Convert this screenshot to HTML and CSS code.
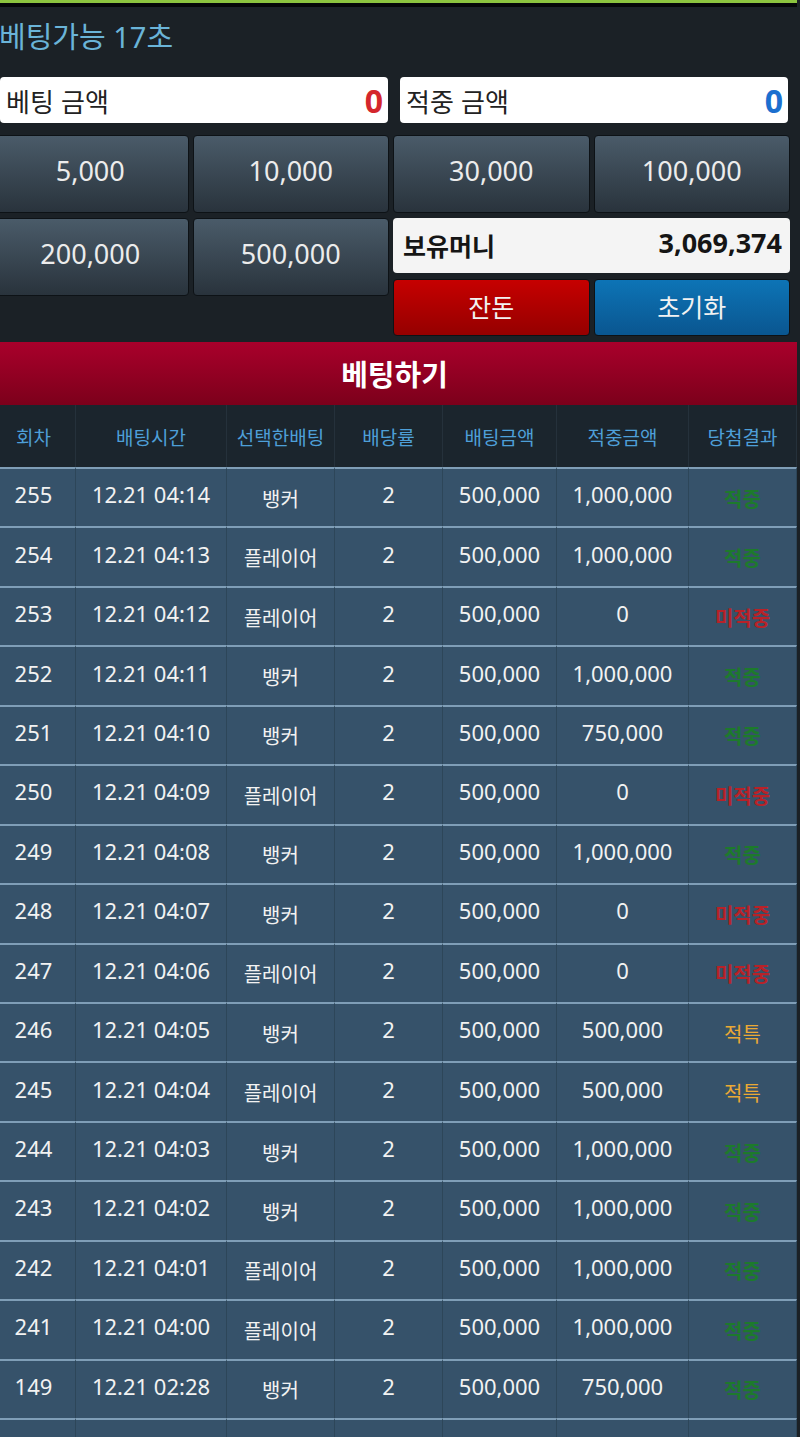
FILE: index.html
```html
<!DOCTYPE html>
<html lang="ko">
<head>
<meta charset="utf-8">
<title>베팅</title>
<link rel="stylesheet" href="styles.css">
</head>
<body>
<div class="page">
  <div class="topline"></div>
  <section class="panel">
    <h1 class="timer">베팅가능 17초</h1>
    <div class="amounts">
      <div class="amount"><span class="amount-label">베팅 금액</span><span class="amount-value red">0</span></div>
      <div class="amount"><span class="amount-label">적중 금액</span><span class="amount-value blue">0</span></div>
    </div>
    <div class="chips">
      <button class="chip">5,000</button>
      <button class="chip">10,000</button>
      <button class="chip">30,000</button>
      <button class="chip">100,000</button>
      <button class="chip">200,000</button>
      <button class="chip">500,000</button>
      <div class="side">
        <div class="money"><span class="money-label">보유머니</span><span class="money-value">3,069,374</span></div>
        <div class="actions">
          <button class="action change">잔돈</button>
          <button class="action reset">초기화</button>
        </div>
      </div>
    </div>
  </section>
  <div class="bet-bar">베팅하기</div>
  <table class="history">
    <colgroup>
      <col class="c1"><col class="c2"><col class="c3"><col class="c4"><col class="c5"><col class="c6"><col class="c7">
    </colgroup>
    <thead>
      <tr><th>회차</th><th>배팅시간</th><th>선택한배팅</th><th>배당률</th><th>배팅금액</th><th>적중금액</th><th>당첨결과</th></tr>
    </thead>
    <tbody>
      <tr><td>255</td><td>12.21 04:14</td><td class="ko">뱅커</td><td>2</td><td>500,000</td><td>1,000,000</td><td class="ko win">적중</td></tr>
      <tr><td>254</td><td>12.21 04:13</td><td class="ko">플레이어</td><td>2</td><td>500,000</td><td>1,000,000</td><td class="ko win">적중</td></tr>
      <tr><td>253</td><td>12.21 04:12</td><td class="ko">플레이어</td><td>2</td><td>500,000</td><td>0</td><td class="ko lose">미적중</td></tr>
      <tr><td>252</td><td>12.21 04:11</td><td class="ko">뱅커</td><td>2</td><td>500,000</td><td>1,000,000</td><td class="ko win">적중</td></tr>
      <tr><td>251</td><td>12.21 04:10</td><td class="ko">뱅커</td><td>2</td><td>500,000</td><td>750,000</td><td class="ko win">적중</td></tr>
      <tr><td>250</td><td>12.21 04:09</td><td class="ko">플레이어</td><td>2</td><td>500,000</td><td>0</td><td class="ko lose">미적중</td></tr>
      <tr><td>249</td><td>12.21 04:08</td><td class="ko">뱅커</td><td>2</td><td>500,000</td><td>1,000,000</td><td class="ko win">적중</td></tr>
      <tr><td>248</td><td>12.21 04:07</td><td class="ko">뱅커</td><td>2</td><td>500,000</td><td>0</td><td class="ko lose">미적중</td></tr>
      <tr><td>247</td><td>12.21 04:06</td><td class="ko">플레이어</td><td>2</td><td>500,000</td><td>0</td><td class="ko lose">미적중</td></tr>
      <tr><td>246</td><td>12.21 04:05</td><td class="ko">뱅커</td><td>2</td><td>500,000</td><td>500,000</td><td class="ko tie">적특</td></tr>
      <tr><td>245</td><td>12.21 04:04</td><td class="ko">플레이어</td><td>2</td><td>500,000</td><td>500,000</td><td class="ko tie">적특</td></tr>
      <tr><td>244</td><td>12.21 04:03</td><td class="ko">뱅커</td><td>2</td><td>500,000</td><td>1,000,000</td><td class="ko win">적중</td></tr>
      <tr><td>243</td><td>12.21 04:02</td><td class="ko">뱅커</td><td>2</td><td>500,000</td><td>1,000,000</td><td class="ko win">적중</td></tr>
      <tr><td>242</td><td>12.21 04:01</td><td class="ko">플레이어</td><td>2</td><td>500,000</td><td>1,000,000</td><td class="ko win">적중</td></tr>
      <tr><td>241</td><td>12.21 04:00</td><td class="ko">플레이어</td><td>2</td><td>500,000</td><td>1,000,000</td><td class="ko win">적중</td></tr>
      <tr><td>149</td><td>12.21 02:28</td><td class="ko">뱅커</td><td>2</td><td>500,000</td><td>750,000</td><td class="ko win">적중</td></tr>
      <tr><td>1056</td><td>12.20 23:55</td><td class="ko">플레이어</td><td>2</td><td>357,000</td><td>0</td><td class="ko lose">미적중</td></tr>
    </tbody>
  </table>
</div>
</body>
</html>
```

FILE: styles.css
```css
html, body {
  margin: 0;
  padding: 0;
}
body {
  background: #1b2126;
  font-family: "Noto Sans", "Noto Sans CJK KR", sans-serif;
  overflow: hidden;
}
.page {
  margin-left: -8px;
  width: 805px;
}
.topline {
  height: 3px;
  background: #8cc43f;
  border-bottom: 4px solid #050708;
}
.panel {
  background: #1b2126;
  padding-bottom: 6px;
}
.timer {
  margin: 0;
  height: 63px;
  line-height: 60px;
  padding-left: 7px;
  font-size: 29px;
  font-weight: 400;
  color: #6ab4d8;
  font-family: "Noto Sans", "Noto Sans CJK KR", sans-serif;
}
.amounts {
  display: flex;
  gap: 12px;
  margin-top: 7px;
  padding-left: 8px;
}
.amount {
  width: 388px;
  height: 46px;
  box-sizing: border-box;
  background: #ffffff;
  border-radius: 4px;
  display: flex;
  align-items: center;
  justify-content: space-between;
  padding: 0 5px 0 6px;
}
.amount-label {
  font-size: 26px;
  color: #222;
  font-family: "Noto Sans CJK KR", sans-serif;
}
.amount-value {
  font-size: 32px;
  font-weight: 700;
}
.red { color: #d4262c; }
.blue { color: #1b6fcf; }
.chips {
  display: grid;
  grid-template-columns: repeat(4, 1fr);
  column-gap: 4px;
  row-gap: 5px;
  margin: 12px 7px 0 0;
  align-items: start;
}
.chip, .action {
  font-family: "Noto Sans", "Noto Sans CJK KR", sans-serif;
  border: 1px solid #0d1216;
  border-radius: 4px;
  padding: 0;
  cursor: pointer;
}
.chip {
  height: 78px;
  padding-bottom: 8px;
  background: linear-gradient(#4a5b69, #29333c);
  color: #ececec;
  font-size: 27px;
}
.side {
  grid-column: span 2;
  display: flex;
  flex-direction: column;
  gap: 6px;
}
.money {
  height: 55px;
  box-sizing: border-box;
  background: #f4f4f4;
  border-radius: 4px;
  display: flex;
  align-items: center;
  justify-content: space-between;
  padding: 0 8px 6px 10px;
  color: #151515;
  font-weight: 700;
}
.money-label {
  font-size: 25px;
  font-family: "Noto Sans CJK KR", sans-serif;
  padding-top: 5px;
}
.money-value {
  font-size: 27px;
}
.actions {
  display: grid;
  grid-template-columns: 1fr 1fr;
  gap: 4px;
}
.action {
  height: 57px;
  padding-bottom: 3px;
  color: #f2f2f2;
  font-size: 25px;
  font-family: "Noto Sans CJK KR", sans-serif;
}
.change {
  background: linear-gradient(#c60000, #950000);
}
.reset {
  background: linear-gradient(#0d74b6, #0a5690);
}
.bet-bar {
  height: 63px;
  line-height: 63px;
  background: linear-gradient(#a9002b, #7c001b);
  color: #ffffff;
  font-size: 29px;
  font-weight: 700;
  text-align: center;
  font-family: "Noto Sans CJK KR", sans-serif;
}
.history {
  width: 805px;
  table-layout: fixed;
  border-collapse: separate;
  border-spacing: 0;
}
.c1 { width: 84px; }
.c2 { width: 151px; }
.c3 { width: 108px; }
.c4 { width: 108px; }
.c5 { width: 114px; }
.c6 { width: 132px; }
.c7 { width: 108px; }
.history th {
  height: 62px;
  padding: 0;
  background: #1b252d;
  color: #4e9fd8;
  font-size: 19px;
  font-weight: 400;
  font-family: "Noto Sans CJK KR", sans-serif;
  border-right: 1px solid #25313b;
}
.history td {
  height: 50.44px;
  padding: 0 0 7px;
  background: #36526a;
  color: #f2f2f2;
  font-size: 22px;
  text-align: center;
  vertical-align: middle;
  border-top: 2px solid #7f9eb7;
  border-right: 1px solid #2d4659;
  white-space: nowrap;
}
.history td.ko {
  font-family: "Noto Sans CJK KR", sans-serif;
  font-size: 20px;
  padding: 1px 0 0;
  height: 56.44px;
}
.history td.win {
  color: #1d7a2c;
  font-weight: 700;
}
.history td.lose {
  color: #b82228;
  font-weight: 700;
}
.history td.tie {
  color: #eaa935;
}
```
